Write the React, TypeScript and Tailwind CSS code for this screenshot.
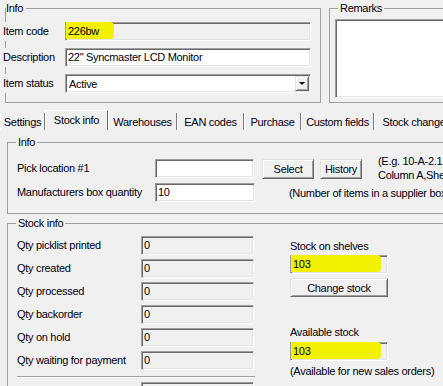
import React from 'react';

const sunken =
  'border border-[#a0a0a0] border-b-white border-r-white shadow-[inset_1px_1px_0_#696969,inset_-1px_-1px_0_#e3e3e3]';
const raised =
  'border border-[#e3e3e3] border-b-[#696969] border-r-[#696969] shadow-[inset_1px_1px_0_#fff,inset_-1px_-1px_0_#a0a0a0]';

function Field({
  value,
  width,
  gray,
  mark,
}: {
  value?: string;
  width: string;
  gray?: boolean;
  mark?: string;
}) {
  return (
    <div className={`relative h-[19px] shrink-0 ${width} ${sunken} ${gray ? 'bg-[#f0f0f0]' : 'bg-white'}`}>
      {mark && <span className={`absolute left-0 -top-[1px] h-[17px] rounded-r-[4px] bg-[#f2f200] ${mark}`} />}
      <span className="relative block pl-[2px] leading-[17px] whitespace-nowrap">{value}</span>
    </div>
  );
}

function Button({ label, width, h = 'h-[20px]' }: { label: string; width: string; h?: string }) {
  return (
    <div className={`flex items-center justify-center shrink-0 bg-[#f0f0f0] ${h} ${width} ${raised}`}>
      {label}
    </div>
  );
}

const tabs = [
  { label: 'Settings', w: 'w-[45px]' },
  { label: 'Stock info', w: 'w-[63px]', active: true },
  { label: 'Warehouses', w: 'w-[69px]' },
  { label: 'EAN codes', w: 'w-[67px]' },
  { label: 'Purchase', w: 'w-[57px]' },
  { label: 'Custom fields', w: 'w-[73px]' },
  { label: 'Stock change', w: 'w-[80px]' },
];

const qtyRows = [
  'Qty picklist printed',
  'Qty created',
  'Qty processed',
  'Qty backorder',
  'Qty on hold',
  'Qty waiting for payment',
];

export default function App() {
  return (
    <div className="w-[443px] h-[386px] overflow-hidden bg-[#f0f0f0] text-[11px] leading-[14px] tracking-[-0.3px] text-[#000010] font-['Liberation_Sans',Arial,sans-serif]">
      <div className="flex w-[600px] pt-[1px]">
        <fieldset className="ml-[5px] w-[316px] h-[102px] shrink-0 border border-[#a0a0a0]">
          <legend className="leading-[14px] pr-[3px]">Info</legend>
          <div className="flex flex-col gap-[7px] pt-[7px]">
            <div className="flex items-center">
              <span className="-ml-[5px] w-[64px] pl-[2px] h-[19px] leading-[19px] bg-[#f0f0f0]">Item code</span>
              <Field value="226bw" width="w-[246px]" gray mark="w-[48px]" />
            </div>
            <div className="flex items-center">
              <span className="-ml-[5px] w-[64px] pl-[2px] h-[19px] leading-[19px] bg-[#f0f0f0]">Description</span>
              <Field value={'22" Syncmaster LCD Monitor'} width="w-[246px]" />
            </div>
            <div className="flex items-center">
              <span className="-ml-[5px] w-[64px] pl-[2px] h-[19px] leading-[19px] bg-[#f0f0f0]">Item status</span>
              <div className={`flex items-center h-[19px] w-[246px] bg-white ${sunken}`}>
                <span className="flex-1 pl-[3px]">Active</span>
                <div className={`flex items-center justify-center w-[14px] h-[15px] mr-[1px] bg-[#f0f0f0] ${raised}`}>
                  <span className="w-0 h-0 border-l-[3px] border-r-[3px] border-t-[3px] border-l-transparent border-r-transparent border-t-black" />
                </div>
              </div>
            </div>
          </div>
        </fieldset>

        <fieldset className="ml-[8px] w-[200px] h-[102px] shrink-0 border border-[#a0a0a0]">
          <legend className="ml-[8px] px-[2px] leading-[14px]">Remarks</legend>
          <div className={`ml-[5px] mt-[4px] h-[79px] w-[190px] bg-white ${sunken}`} />
        </fieldset>
      </div>

      <div className="flex items-end h-[20px] mt-[7px] w-[600px]">
        {tabs.map(t => (
          <div
            key={t.label}
            className={`flex items-center justify-center shrink-0 whitespace-nowrap ${t.w} ${
              t.active
                ? 'h-[20px] pb-[1px] border-l border-t border-white border-r-[#696969] border-r'
                : 'h-[17px] border-l border-white border-r border-r-[#7a7a7a]'
            }`}
          >
            {t.label}
          </div>
        ))}
      </div>

      <div className="w-[700px]">
        <fieldset className="ml-[7px] mt-[5px] h-[79px] w-[500px] border border-[#a0a0a0]">
          <legend className="ml-[8px] px-[2px] leading-[14px]">Info</legend>
          <div className="flex flex-col gap-[4px] pt-[10px] pl-[9px]">
            <div className="flex items-start h-[20px]">
              <span className="w-[138px] leading-[19px]">Pick location #1</span>
              <Field width="w-[99px]" />
              <div className="ml-[8px]">
                <Button label="Select" width="w-[52px]" />
              </div>
              <div className="ml-[6px]">
                <Button label="History" width="w-[42px]" />
              </div>
              <div className="ml-[16px] -mt-[5px] whitespace-nowrap">
                <div>(E.g. 10-A-2.1 = Warehouse 10,</div>
                <div>Column A,Shelf 2,Position 1)</div>
              </div>
            </div>
            <div className="flex items-center">
              <span className="w-[138px] leading-[19px]">Manufacturers box quantity</span>
              <Field value="10" width="w-[100px]" />
              <span className="ml-[34px] whitespace-nowrap">(Number of items in a supplier box)</span>
            </div>
          </div>
        </fieldset>

        <fieldset className="ml-[7px] mt-[2px] h-[200px] w-[500px] border border-[#a0a0a0]">
          <legend className="ml-[8px] px-[2px] leading-[14px]">Stock info</legend>
          <div className="flex pl-[9px] pt-[6px]">
            <div className="flex flex-col">
              <div className="flex flex-col gap-[4px]">
                {qtyRows.map(r => (
                  <div key={r} className="flex items-center">
                    <span className="w-[124px] leading-[19px]">{r}</span>
                    <Field value="0" width="w-[113px]" gray />
                  </div>
                ))}
              </div>
              <div className="mt-[6px] w-[238px] h-[2px] border-t border-[#a0a0a0] border-b border-b-white" />
              <div className="mt-[4px] flex">
                <span className="w-[124px]" />
                <Field value="0" width="w-[113px]" gray />
              </div>
            </div>
            <div className="ml-[35px] flex flex-col">
              <span className="mt-[3px]">Stock on shelves</span>
              <div className="mt-[2px]">
                <Field value="103" width="w-[98px]" gray mark="w-[90px]" />
              </div>
              <div className="mt-[4px]">
                <Button label="Change stock" width="w-[98px]" h="h-[19px]" />
              </div>
              <span className="mt-[28px]">Available stock</span>
              <div className="mt-[3px]">
                <Field value="103" width="w-[98px]" gray mark="w-[90px]" />
              </div>
              <span className="mt-[3px] whitespace-nowrap">(Available for new sales orders)</span>
            </div>
          </div>
        </fieldset>
      </div>
    </div>
  );
}
